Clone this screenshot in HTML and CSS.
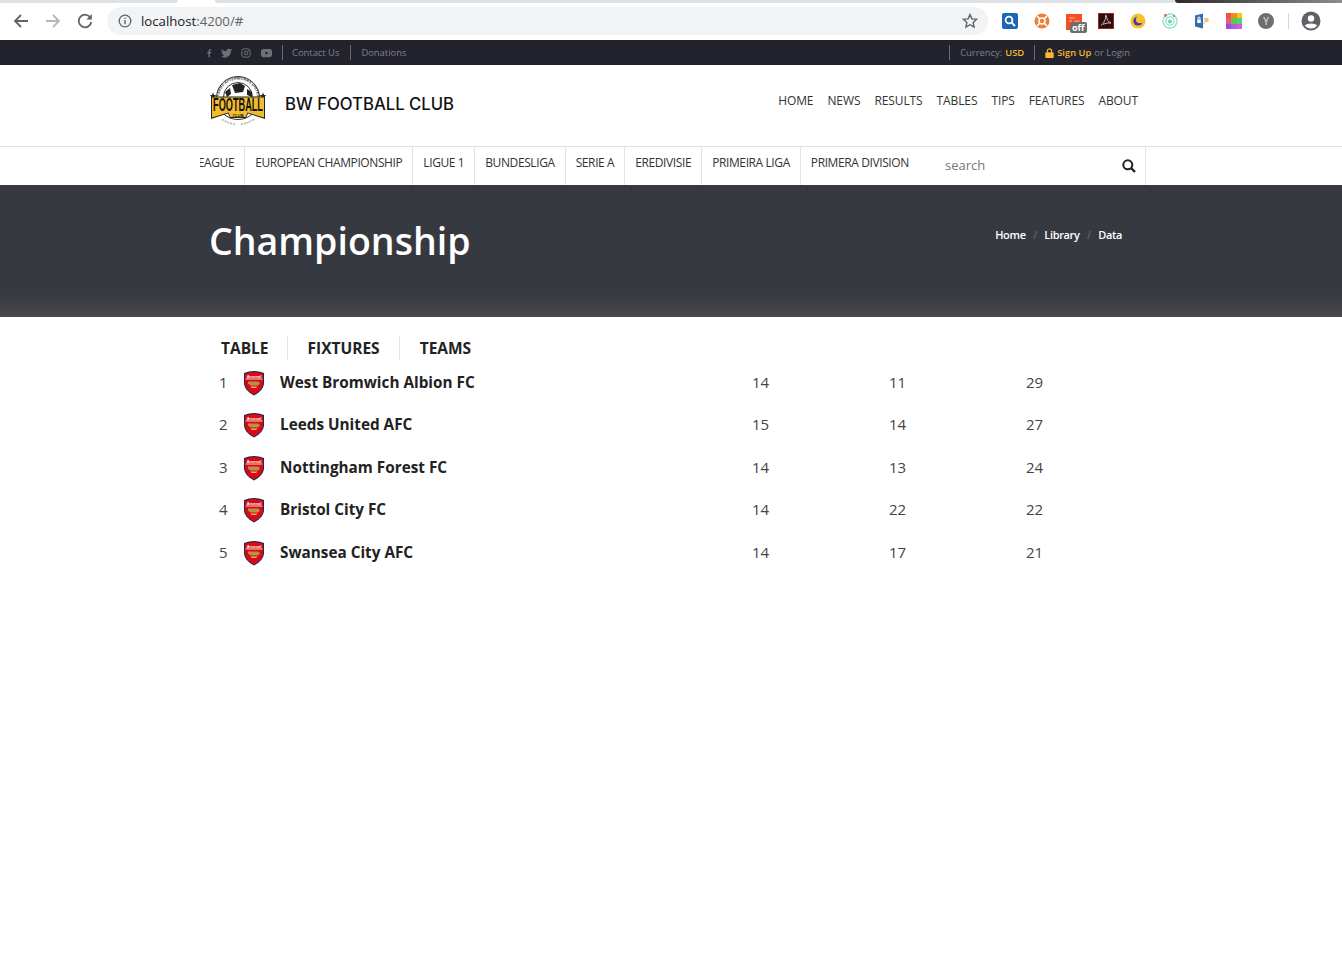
FILE: index.html

```html
<!DOCTYPE html>
<html lang="en">
<head>
  <meta charset="UTF-8" />
  <meta name="viewport" content="width=device-width, initial-scale=1.0" />
  <title>BW Football Club</title>
  <link rel="stylesheet" href="styles.css">
</head>
<body>
  <svg class="sprites" width="0" height="0">
    <symbol id="crest" viewBox="0 0 22 26">
      <path d="M1 3 Q11 -1 21 3 L21 14 Q20 21 11 25.500 Q2 21 1 14 Z" fill="#1c2a52"/>
      <path d="M2 3.800 Q11 .4 20 3.800 L20 14 Q19 20.400 11 24.400 Q3 20.400 2 14 Z" fill="#db0a12"/>
      <text x="11" y="7.600" text-anchor="middle" class="crest-text">Arsenal</text>
      <path d="M2.600 9H19.400" stroke="#f3d9d0" stroke-width="1"/>
      <path d="M5 11.500 H15.500 L17 13.500 L15 15.500 H7.500 L5 13.500 Z" fill="#b98f4a"/>
      <path d="M7.500 16.500 H14.500 L13 18 H8.500 Z" fill="#d8b878"/>
    </symbol>
  </svg>

  <div class="chrome">
    <div class="tabstrip">
      <span class="tab-back tab-left"></span>
      <span class="tab-back tab-mid"></span>
      <span class="tab-back tab-dark"></span>
    </div>
    <div class="toolbar">
      <svg class="nav-btn" viewBox="0 0 16 16"><path d="M15 8H2.500M8 2 2 8l6 6" fill="none" stroke="#5f6368" stroke-width="1.800"/></svg>
      <svg class="nav-btn" viewBox="0 0 16 16"><path d="M1 8h12.500M8 2l6 6-6 6" fill="none" stroke="#b4b6b9" stroke-width="1.800"/></svg>
      <svg class="nav-btn" viewBox="0 0 16 16"><path d="M13.600 5A6.300 6.300 0 1 0 14.300 9" fill="none" stroke="#5f6368" stroke-width="1.800"/><path d="M14.800 1v5.400H9.400z" fill="#5f6368"/></svg>
      <div class="omnibox">
        <svg class="info-icon" viewBox="0 0 14 14"><circle cx="7" cy="7" r="5.800" fill="none" stroke="#5f6368" stroke-width="1.300"/><path d="M7 6v4.200M7 3.700v1.300" stroke="#5f6368" stroke-width="1.400"/></svg>
        <span class="url">localhost<span class="url-rest">:4200/#</span></span>
        <svg class="star" viewBox="0 0 16 16"><path d="M8 1.600l1.900 4.300 4.700.5-3.500 3.100 1 4.600L8 11.700l-4.100 2.400 1-4.600L1.400 6.400l4.700-.5z" fill="none" stroke="#5f6368" stroke-width="1.400"/></svg>
      </div>
      <div class="extensions">
        <svg class="ext" viewBox="0 0 16 16"><rect width="16" height="16" rx="2" fill="#1e66b4"/><circle cx="7" cy="7" r="3.400" fill="none" stroke="#fff" stroke-width="1.800"/><path d="M9.600 9.600 13 13" stroke="#fff" stroke-width="2"/></svg>
        <svg class="ext" viewBox="0 0 16 16"><circle cx="8" cy="8" r="7.500" fill="#ee7f3a"/><circle cx="8" cy="8" r="3" fill="none" stroke="#fff" stroke-width="1.600"/><path d="M3 3l2.600 2.600M13 3l-2.600 2.600M3 13l2.600-2.600M13 13l-2.600-2.600" stroke="#fff" stroke-width="1.600"/></svg>
        <span class="ext-off">
          <svg class="ext" viewBox="0 0 16 16"><rect width="16" height="16" fill="#f4511e"/><path d="M3 4h6M3 7h3M9 7h4v3H9z" stroke="#ffb199" fill="none"/></svg>
          <span class="off-badge">off</span>
        </span>
        <svg class="ext" viewBox="0 0 16 16"><rect x=".5" y=".5" width="15" height="15" fill="#2a0f0f" stroke="#a3211c"/><path d="M3 12.500C6 10 8 6 7.500 3c-.2-1.200 1-1 1 .2 0 3 2 6 4.500 6.800-2.500-.3-6 .3-8 1.500" fill="none" stroke="#f0c9c4" stroke-width=".9"/></svg>
        <svg class="ext" viewBox="0 0 16 16"><circle cx="8" cy="8" r="7.500" fill="#f2c230"/><circle cx="8" cy="8" r="4.600" fill="#4a3a9c"/><circle cx="9.800" cy="6.400" r="3.800" fill="#f2c230"/></svg>
        <svg class="ext" viewBox="0 0 16 16"><circle cx="8" cy="8" r="7" fill="none" stroke="#8fe3c4" stroke-width="1.300"/><circle cx="8" cy="8" r="4.200" fill="none" stroke="#8fe3c4" stroke-width="1.300"/><circle cx="8" cy="8.500" r="2" fill="#6fd0ae"/><circle cx="3.500" cy="2.500" r="1.400" fill="#e0664c"/><circle cx="12" cy="3" r="1" fill="#e0664c"/></svg>
        <svg class="ext" viewBox="0 0 16 16"><path d="M1 2.500 9 .5v15l-8-2z" fill="#2f6db5"/><rect x="3.200" y="6.500" width="3.600" height="3.500" fill="#fff"/><path d="M4 6.500V5a1 1 0 0 1 2 0v1.500" fill="none" stroke="#fff"/><circle cx="12.500" cy="7" r="2.300" fill="#f0c27a"/><path d="M11 9l-1.500 2" stroke="#f0c27a" stroke-width="1.200"/></svg>
        <span class="palette">
          <i class="c1"></i><i class="c2"></i><i class="c3"></i>
          <i class="c4"></i><i class="c5"></i><i class="c6"></i>
          <i class="c7"></i><i class="c8"></i><i class="c9"></i>
        </span>
        <span class="avatar-y">Y</span>
        <span class="ext-sep"></span>
        <svg class="profile" viewBox="0 0 20 20"><circle cx="10" cy="10" r="9.500" fill="#5f6368"/><circle cx="10" cy="7.500" r="3.200" fill="#fff"/><path d="M3.800 14.500c2-2.800 10.400-2.800 12.400 0-1.500 2-3.700 3-6.200 3s-4.700-1-6.200-3z" fill="#fff"/></svg>
      </div>
    </div>
  </div>

  <div class="topbar">
    <div class="topbar-inner">
      <div class="topbar-left">
        <div class="socials">
          <svg viewBox="0 0 10 12" class="soc soc-f"><path d="M3.500 12V6.800H1.800V4.700h1.700V3.200C3.500 1.500 4.500.6 6 .6l1.500.1v1.900h-1c-.8 0-1 .4-1 1v1.100h2L7.200 6.800H5.500V12z"/></svg>
          <svg viewBox="0 0 12 10" class="soc soc-t"><path d="M12 1.300c-.4.200-.9.300-1.400.4.500-.3.900-.8 1.100-1.300-.5.300-1 .5-1.600.6A2.500 2.500 0 0 0 5.900 3.200C3.900 3.100 2 2.100.8.600c-.7 1.100-.3 2.600.8 3.300-.4 0-.8-.1-1.100-.3 0 1.200.8 2.200 2 2.500-.4.100-.8.100-1.100 0 .3 1 1.300 1.700 2.300 1.700A5 5 0 0 1 0 8.900 7 7 0 0 0 10.800 2.800c.5-.4.900-.9 1.200-1.500z"/></svg>
          <svg viewBox="0 0 12 12" class="soc soc-i"><rect x="1" y="1" width="10" height="10" rx="2.800" fill="none" stroke="#6f7074" stroke-width="1.200"/><circle cx="6" cy="6" r="2.200" fill="none" stroke="#6f7074" stroke-width="1.200"/><circle cx="8.800" cy="3.200" r=".7"/></svg>
          <svg viewBox="0 0 12 10" class="soc soc-y"><rect y=".5" width="12" height="9" rx="2.500"/><path d="M4.800 3v4l3.400-2z" fill="#22232d"/></svg>
        </div>
        <a class="top-link first-link">Contact Us</a>
        <a class="top-link">Donations</a>
      </div>
      <div class="topbar-right">
        <span class="top-link">Currency: <b class="gold">USD</b></span>
        <span class="top-link">
          <svg class="lock" viewBox="0 0 10 12"><path d="M2.500 5V3.500a2.500 2.500 0 0 1 5 0V5" fill="none" stroke="#f5b82e" stroke-width="1.400"/><rect y="5" width="10" height="7" rx="1" fill="#f5b82e"/></svg>
          <b class="gold">Sign Up</b> or Login
        </span>
      </div>
    </div>
  </div>

  <header class="site-header">
    <div class="brand">
      <svg class="logo" viewBox="0 0 56 52">
        <path id="logoArc" d="M8.500 24 A19.500 19.500 0 0 1 47.500 24" fill="none"/>
        <circle cx="28" cy="23" r="21.500" fill="#fff" stroke="#333" stroke-width="1"/>
        <text class="logo-arc"><textPath href="#logoArc" startOffset="3">LEEDS AFTERWORKS UNITED</textPath></text>
        <circle cx="28" cy="22" r="14.500" fill="#fff" stroke="#333" stroke-width="1"/>
        <path d="M22 10l8-2 5 3-2 6-8 1zM15 17l5-4 1 6-4 3zM37 14l5 3 0 5-5-2z" fill="#222"/>
        <path d="M3 17.500l1 2.500 2.500.2-2 1.500.7 2.500-2.200-1.500-2.200 1.500.7-2.500-2-1.500 2.500-.2zM53 17.500l1 2.500 2.500.2-2 1.500.7 2.500-2.200-1.500-2.200 1.500.7-2.500-2-1.500 2.500-.2z" fill="#222"/>
        <path d="M1 21.500H55V44L38 38.500 36 43H20L18 38.500 1 44Z" fill="#222"/>
        <path d="M2 22.500H54V42.500L37.500 37.500 35.500 42H20.500L18.500 37.500 2 42.500Z" fill="#f2bc2c"/>
        <text transform="translate(28 36) scale(.51 1)" text-anchor="middle" class="logo-main">FOOTBALL</text>
        <text x="28" y="41.500" text-anchor="middle" class="logo-club">CLUB</text>
        <path d="M12 44.500l6 3 7 2M44 44.500l-6 3-7 2" fill="none" stroke="#b5b5a8" stroke-width="1.600" stroke-dasharray="2 1"/>
      </svg>
      <span class="brand-name">BW FOOTBALL CLUB</span>
    </div>
    <nav class="main-nav">
      <a>HOME</a><a>NEWS</a><a>RESULTS</a><a>TABLES</a><a>TIPS</a><a>FEATURES</a><a>ABOUT</a>
    </nav>
  </header>

  <div class="league-bar">
    <div class="league-inner">
      <div class="league-scroll">
        <ul class="league-list">
          <li>PREMIER LEAGUE</li>
          <li>EUROPEAN CHAMPIONSHIP</li>
          <li>LIGUE 1</li>
          <li>BUNDESLIGA</li>
          <li>SERIE A</li>
          <li>EREDIVISIE</li>
          <li>PRIMEIRA LIGA</li>
          <li>PRIMERA DIVISION</li>
        </ul>
      </div>
      <form class="search-box">
        <input type="text" placeholder="search" />
        <svg class="search-icon" viewBox="0 0 14 14"><circle cx="5.800" cy="5.800" r="4.500" fill="none" stroke="#222" stroke-width="2"/><path d="M9 9l4 4" stroke="#222" stroke-width="2.400"/></svg>
      </form>
    </div>
  </div>

  <section class="hero">
    <div class="hero-inner">
      <h1>Championship</h1>
      <ol class="crumbs">
        <li>Home</li>
        <li class="crumb-sep">/</li>
        <li>Library</li>
        <li class="crumb-sep">/</li>
        <li>Data</li>
      </ol>
    </div>
  </section>

  <main class="content">
    <div class="tabs">
      <a>TABLE</a><a>FIXTURES</a><a>TEAMS</a>
    </div>
    <div class="standings">
      <div class="row">
        <span class="pos">1</span>
        <svg class="crest"><use href="#crest"/></svg>
        <span class="team">West Bromwich Albion FC</span>
        <span>14</span><span>11</span><span>29</span>
      </div>
      <div class="row">
        <span class="pos">2</span>
        <svg class="crest"><use href="#crest"/></svg>
        <span class="team">Leeds United AFC</span>
        <span>15</span><span>14</span><span>27</span>
      </div>
      <div class="row">
        <span class="pos">3</span>
        <svg class="crest"><use href="#crest"/></svg>
        <span class="team">Nottingham Forest FC</span>
        <span>14</span><span>13</span><span>24</span>
      </div>
      <div class="row">
        <span class="pos">4</span>
        <svg class="crest"><use href="#crest"/></svg>
        <span class="team">Bristol City FC</span>
        <span>14</span><span>22</span><span>22</span>
      </div>
      <div class="row">
        <span class="pos">5</span>
        <svg class="crest"><use href="#crest"/></svg>
        <span class="team">Swansea City AFC</span>
        <span>14</span><span>17</span><span>21</span>
      </div>
    </div>
  </main>
</body>
</html>
```

FILE: styles.css

```css
* {
  box-sizing: border-box;
}

body {
  margin: 0;
  font-family: "Open Sans", sans-serif;
  background: #ffffff;
  color: #222;
}

.sprites {
  display: block;
  height: 0;
}

/* browser chrome */
.chrome {
  height: 40px;
  background: #ffffff;
}

.tabstrip {
  display: flex;
  height: 3px;
}

.tab-back {
  display: block;
  height: 3px;
  background: #dee1e6;
}

.tab-left {
  width: 178px;
  border-radius: 0 0 6px 0;
}

.tab-mid {
  width: 960px;
  margin-left: 37px;
  border-radius: 0 0 0 6px;
}

.tab-dark {
  flex: 1;
  background: linear-gradient(90deg, #2b2b2b, #8b8c8e);
  border-radius: 0 0 0 6px;
}

.toolbar {
  display: flex;
  align-items: center;
  height: 36px;
  padding: 0 0 0 13px;
}

.nav-btn {
  width: 16px;
  height: 16px;
  margin-right: 16px;
}

.omnibox {
  display: flex;
  align-items: center;
  width: 881px;
  height: 28px;
  margin-left: -2px;
  padding: 0 10px 0 11px;
  background: #f1f3f4;
  border-radius: 14px;
}

.info-icon {
  width: 14px;
  height: 14px;
}

.url {
  margin-left: 9px;
  font-size: 13.2px;
  color: #202124;
}

.url-rest {
  color: #5f6368;
}

.star {
  width: 16px;
  height: 16px;
  margin-left: auto;
}

.extensions {
  display: flex;
  align-items: center;
  margin-left: 14px;
}

.ext {
  display: block;
  width: 16px;
  height: 16px;
  margin-right: 16px;
}

.ext-off {
  position: relative;
  display: block;
  margin-top: 2px;
}

.off-badge {
  position: absolute;
  left: 4px;
  top: 8px;
  padding: 0 2px;
  font-size: 9px;
  line-height: 11px;
  font-weight: 700;
  color: #fff;
  background: #6e6e6e;
  border-radius: 2px;
}

.palette {
  display: grid;
  grid-template-columns: repeat(3, 1fr);
  width: 16px;
  height: 16px;
  margin-right: 16px;
}

.palette i {
  display: block;
}

.c1 { background: #f0532b; }
.c2 { background: #f58a1f; }
.c3 { background: #f7c11e; }
.c4 { background: #e8558a; }
.c5 { background: #5fc84a; }
.c6 { background: #52d07a; }
.c7 { background: #a34bd6; }
.c8 { background: #b05ae0; }
.c9 { background: #d45ae0; }

.avatar-y {
  width: 16px;
  height: 16px;
  border-radius: 50%;
  background: #6e6e6e;
  color: #e8e8e8;
  font-size: 10px;
  line-height: 16px;
  text-align: center;
}

.ext-sep {
  width: 1px;
  height: 16px;
  margin: 0 12px 0 14px;
  background: #d5d6d8;
}

.profile {
  width: 20px;
  height: 20px;
}

/* top dark bar */
.topbar {
  height: 25px;
  background: #22232d;
}

.topbar-inner {
  display: flex;
  justify-content: space-between;
  align-items: center;
  width: 946px;
  height: 25px;
  margin-left: 200px;
  padding: 0 6px 0 6px;
  font-size: 9.4px;
  color: #808186;
}

.topbar-left,
.topbar-right {
  display: flex;
  align-items: center;
}

.socials {
  display: flex;
  align-items: center;
}

.soc {
  display: block;
  height: 10px;
  fill: #6f7074;
}

.soc-f {
  width: 7px;
  margin-right: 8px;
}

.soc-t {
  width: 11px;
  margin-right: 9px;
}

.soc-i {
  width: 10px;
  margin-right: 10px;
}

.soc-y {
  width: 11px;
}

.top-link {
  display: flex;
  align-items: center;
  gap: 3px;
  height: 15px;
  padding: 0 10px;
  border-left: 1px solid #6a6b70;
  line-height: 15px;
}

.first-link {
  margin-left: 10px;
  padding: 0 11px 0 9px;
}

.gold {
  font-weight: 600;
  color: #f5b82e;
}

.lock {
  width: 9px;
  height: 10px;
}

/* logo row */
.site-header {
  display: flex;
  justify-content: space-between;
  align-items: flex-start;
  width: 946px;
  height: 81px;
  margin-left: 200px;
  padding: 10px 8px 0 10px;
}

.brand {
  display: flex;
  align-items: center;
  gap: 19px;
}

.logo {
  display: block;
  width: 56px;
  height: 52px;
}

.logo-arc {
  font-family: "Liberation Sans", sans-serif;
  font-size: 3.800px;
  font-weight: 700;
  fill: #333;
}

.logo-main {
  font-family: "Liberation Sans", sans-serif;
  font-size: 18px;
  font-weight: 700;
  fill: #111;
}

.logo-club {
  font-family: "Liberation Sans", sans-serif;
  font-size: 4px;
  font-weight: 700;
  fill: #111;
}

.brand-name {
  margin-top: 5px;
  font-family: Inter, sans-serif;
  font-size: 16.700px;
  font-weight: 500;
  color: #111;
}

.main-nav {
  display: flex;
  gap: 14px;
  margin-top: 17px;
  font-size: 12px;
  line-height: 18px;
  letter-spacing: -0.1px;
  color: #333;
}

/* league row */
.league-bar {
  height: 39px;
  border-top: 1px solid #e3e3e3;
}

.league-inner {
  display: flex;
  width: 946px;
  height: 38px;
  margin-left: 200px;
  border-right: 1px solid #e3e3e3;
}

.league-scroll {
  width: 709px;
  overflow: hidden;
}

.league-list {
  display: flex;
  margin: 0 0 0 -67.500px;
  padding: 0;
  list-style: none;
}

.league-list li {
  flex: none;
  height: 38px;
  padding: 7px 10px 0;
  border-right: 1px solid #e3e3e3;
  font-size: 12px;
  line-height: 18px;
  letter-spacing: -0.4px;
  color: #333;
  white-space: nowrap;
}

.search-box {
  display: flex;
  flex: 1;
  align-items: center;
  justify-content: space-between;
  padding: 0 9px 2px 36px;
}

.search-box input {
  width: 150px;
  padding: 0;
  border: none;
  outline: none;
  font-family: "Open Sans", sans-serif;
  font-size: 13px;
  color: #777;
}

.search-box input::placeholder {
  color: #777;
  opacity: 1;
}

.search-icon {
  width: 14px;
  height: 14px;
  margin-top: 2px;
}

/* title band */
.hero {
  height: 132px;
  background: linear-gradient(180deg, #363940 0, #363940 82%, #47484e 100%);
}

.hero-inner {
  display: flex;
  justify-content: space-between;
  align-items: flex-start;
  width: 946px;
  margin-left: 200px;
  padding: 28px 24px 0 9px;
}

.hero h1 {
  margin: 0;
  font-size: 37.500px;
  font-weight: 600;
  line-height: 56px;
  color: #fff;
}

.crumbs {
  display: flex;
  gap: 7.500px;
  margin: 13px 0 0;
  padding: 0;
  list-style: none;
  font-size: 11px;
  line-height: 18px;
  font-weight: 600;
  letter-spacing: -0.35px;
  color: #fff;
}

.crumb-sep {
  font-weight: 400;
  color: #6d7076;
}

/* standings */
.content {
  width: 946px;
  margin-left: 200px;
  padding: 19px 0 0 21px;
}

.tabs {
  display: flex;
  align-items: center;
  height: 24px;
}

.tabs a {
  padding: 0 19px 0 20px;
  border-left: 1px solid #e3e3e3;
  font-size: 15.500px;
  font-weight: 700;
  line-height: 24px;
  color: #222;
}

.tabs a:first-child {
  padding: 0 18px 0 0;
  border-left: none;
}

.standings {
  margin-top: 0.500px;
}

.row {
  display: grid;
  grid-template-columns: 22px 37px 472px 137px 137px 137px;
  align-items: center;
  height: 42.500px;
  font-size: 15px;
  color: #444;
}

.pos {
  margin-left: -2px;
}

.crest {
  display: block;
  width: 22px;
  height: 26px;
  margin-top: 2px;
}

.crest-text {
  font-family: "Liberation Sans", sans-serif;
  font-size: 4px;
  font-weight: 700;
  fill: #fff;
}

.team {
  font-size: 15.300px;
  font-weight: 700;
  color: #222;
}
```
